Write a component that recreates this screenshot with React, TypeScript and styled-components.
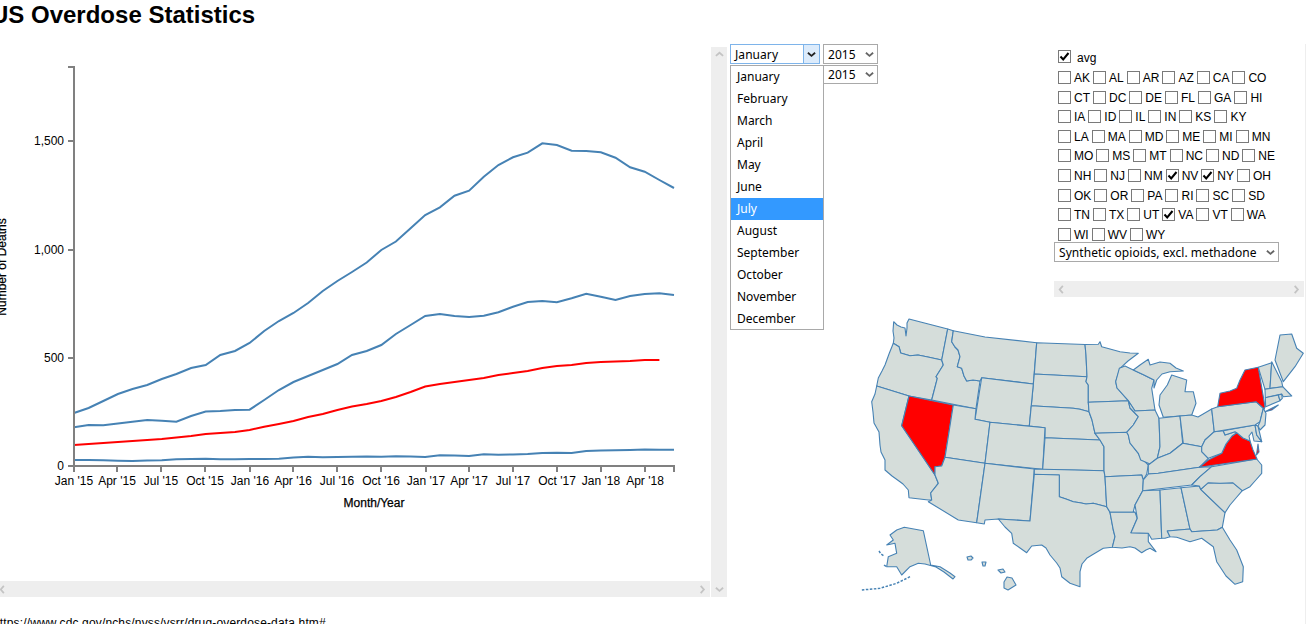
import { Fragment } from 'react';
import styled, { createGlobalStyle } from 'styled-components';

const GlobalStyle = createGlobalStyle`
  html, body {
    margin: 0;
    padding: 0;
    background: #fff;
    overflow: hidden;
  }
`;

const Page = styled.div`
  width: 1306px;
  height: 624px;
  overflow: hidden;
  font-family: "Liberation Sans", Arial, sans-serif;
  color: #000;
`;

const Title = styled.h1`
  margin: 0 0 0 -9px;
  height: 44px;
  font-size: 24px;
  line-height: 30px;
  font-weight: 700;
`;

const Main = styled.div`
  display: grid;
  grid-template-columns: 727px 579px;
  height: 556px;
`;

const ChartPane = styled.div`
  display: grid;
  grid-template-columns: 710px 1px 16px;
  grid-template-rows: 534px 16px;
  margin-top: 3px;
`;

const ChartView = styled.div`
  grid-column: 1 / 3;
  overflow: hidden;
`;

const Track = styled.div<{ $vertical?: boolean }>`
  background: #eeeeee;
  display: flex;
  flex-direction: ${(p) => (p.$vertical ? 'column' : 'row')};
  justify-content: space-between;
  align-items: center;
  box-sizing: border-box;
`;

const HScroll = styled(Track)`
  grid-column: 1;
  grid-row: 2;
  padding: 0 3px 0 0;
  margin-left: -2px;
`;

const VScroll = styled(Track)`
  grid-column: 3;
  grid-row: 1 / 3;
  padding: 3px 0;
`;

const SideScroll = styled(Track)`
  height: 16px;
  margin-top: 19px;
  padding: 0 3px;
`;

const RightSide = styled.div`
  display: flex;
  flex-direction: column;
`;

const TopRow = styled.div`
  display: flex;
  justify-content: space-between;
  height: 266px;
  padding: 0 1px 0 3px;
  box-sizing: border-box;
  border-right: 1px solid #eeeeee;
`;

const DatePicker = styled.div`
  position: relative;
  display: grid;
  grid-template-columns: 90px 55px;
  grid-template-rows: 20px 19px;
  column-gap: 3px;
  row-gap: 1px;
  width: 148px;
  height: 40px;
`;

const Select = styled.div<{ $focused?: boolean }>`
  display: flex;
  align-items: center;
  justify-content: space-between;
  box-sizing: border-box;
  height: 100%;
  padding-left: 4px;
  border: 1px solid ${(p) => (p.$focused ? '#7eb4ea' : '#a9a9a9')};
  background: #fff;
  font-family: "Noto Sans", sans-serif;
  font-size: 12px;
  letter-spacing: 0.06px;
  white-space: nowrap;
`;

const SubstanceSelect = styled(Select)`
  width: 225px;
  height: 20px;
`;

const SelectArrow = styled.span<{ $focused?: boolean }>`
  display: flex;
  align-items: center;
  justify-content: center;
  width: 16px;
  height: 100%;
  box-sizing: border-box;
  border-left: ${(p) => (p.$focused ? '1px solid #7eb4ea' : 'none')};
  background: ${(p) => (p.$focused ? '#dcebfb' : 'transparent')};
`;

const MonthList = styled.ul`
  position: absolute;
  left: 0;
  top: 21px;
  width: 94px;
  height: 265px;
  margin: 0;
  padding: 0;
  box-sizing: border-box;
  list-style: none;
  background: #fff;
  border: 1px solid #a9a9a9;
  font-family: "Noto Sans", sans-serif;
  font-size: 12px;
  z-index: 2;
`;

const MonthItem = styled.li<{ $active?: boolean }>`
  height: 22px;
  line-height: 22px;
  padding-left: 6px;
  background: ${(p) => (p.$active ? '#3399ff' : 'transparent')};
  color: ${(p) => (p.$active ? '#fff' : '#000')};
`;

const StatePanel = styled.div`
  width: 250px;
  padding-top: 6px;
`;

const CheckArea = styled.div`
  height: 192px;
  padding-left: 4px;
`;

const AvgRow = styled.div`
  display: flex;
  height: 21px;
`;

const AvgLabel = styled.span`
  margin: 1px 0 0 3px;
  font-size: 12px;
  line-height: 14px;
`;

const CheckRow = styled.div`
  display: flex;
  height: 19.6px;
`;

const Box = styled.span`
  display: flex;
  align-items: center;
  justify-content: center;
  flex: none;
  box-sizing: border-box;
  width: 13px;
  height: 13px;
  margin-right: 3px;
  border: 1px solid #7a7a7a;
  background: #fff;
`;

const CheckLabel = styled.span`
  margin: 0 3px 0 0;
  font-size: 12px;
  line-height: 14px;
`;

const Footer = styled.div`
  margin: 16px 0 0 -7px;
  font-size: 12px;
  line-height: 14px;
  letter-spacing: 0.15px;
  white-space: nowrap;
`;

const MapWrap = styled.div`
  margin-left: 133px;
  height: 314px;
  box-sizing: border-box;
  border-right: 1px solid #eeeeee;
`;

const AxisLine = styled.path`
  fill: none;
  stroke: #808080;
  stroke-width: 2;
`;

const SeriesLine = styled.polyline<{ $avg?: boolean }>`
  fill: none;
  stroke: ${(p) => (p.$avg ? '#ff0000' : '#4682b4')};
  stroke-width: 2;
`;

const TickLabel = styled.text`
  font-family: "Liberation Sans", Arial, sans-serif;
  font-size: 12px;
`;

const AxisTitle = styled(TickLabel)`
  stroke: #000;
  stroke-width: 0.25;
`;

const StateShape = styled.polygon<{ $selected?: boolean }>`
  fill: ${(p) => (p.$selected ? '#ff0000' : '#d5dddA')};
  stroke: #4682b4;
  stroke-width: 1.1;
  stroke-linejoin: round;
`;

const IslandChain = styled.polyline`
  fill: none;
  stroke: #4682b4;
  stroke-width: 1.5;
  stroke-dasharray: 2.5 1.5;
`;

const Chevron = ({ dir, color, size = 9 }: { dir: 'up' | 'down' | 'left' | 'right'; color: string; size?: number }) => {
  const paths = {
    up: 'M1 6.5 L5 3 L9 6.5',
    down: 'M1 3 L5 6.5 L9 3',
    left: 'M6.5 1 L3 5 L6.5 9',
    right: 'M3 1 L6.5 5 L3 9',
  };
  return (
    <svg width={size} height={size} viewBox="0 0 10 10">
      <path d={paths[dir]} fill="none" stroke={color} strokeWidth="2" />
    </svg>
  );
};

const Tick = () => (
  <svg width="11" height="11" viewBox="0 0 11 11">
    <path d="M1.5 5.5 L4.2 8.5 L9.5 2" fill="none" stroke="#000" strokeWidth="2" />
  </svg>
);

const MONTHS = ['January', 'February', 'March', 'April', 'May', 'June', 'July', 'August', 'September', 'October', 'November', 'December'];

const STATE_ROWS = [
  ['AK', 'AL', 'AR', 'AZ', 'CA', 'CO'],
  ['CT', 'DC', 'DE', 'FL', 'GA', 'HI'],
  ['IA', 'ID', 'IL', 'IN', 'KS', 'KY'],
  ['LA', 'MA', 'MD', 'ME', 'MI', 'MN'],
  ['MO', 'MS', 'MT', 'NC', 'ND', 'NE'],
  ['NH', 'NJ', 'NM', 'NV', 'NY', 'OH'],
  ['OK', 'OR', 'PA', 'RI', 'SC', 'SD'],
  ['TN', 'TX', 'UT', 'VA', 'VT', 'WA'],
  ['WI', 'WV', 'WY'],
];
const CHECKED = ['NV', 'NY', 'VA'];

const X_TICKS = [
  ['Jan \'15', 74], ['Apr \'15', 117], ['Jul \'15', 161], ['Oct \'15', 205],
  ['Jan \'16', 250], ['Apr \'16', 293], ['Jul \'16', 337], ['Oct \'16', 381],
  ['Jan \'17', 426], ['Apr \'17', 469], ['Jul \'17', 513], ['Oct \'17', 557],
  ['Jan \'18', 601], ['Apr \'18', 645],
] as const;

const Y_TICKS = [['0', 466], ['500', 358], ['1,000', 250], ['1,500', 141]] as const;

const SERIES_A = [413, 408, 401, 394, 389, 385, 379, 374, 368, 365, 355, 351, 343, 331, 321, 313, 303, 291, 281, 272, 262.5, 250, 241.5, 228.3, 215, 207.3, 195.7, 190.7, 176.7, 165, 157.3, 152.7, 143.3, 145, 150.7, 151, 152.3, 157.7, 167.3, 171.7, 180, 188];
const SERIES_B = [427.3, 425, 425.3, 423.5, 421.7, 420, 420.7, 421.7, 416, 411.5, 411, 410, 409.7, 400, 390, 382, 376, 370, 364, 355, 351, 345, 334, 325, 316, 314, 316, 317, 315.7, 312.3, 306.7, 302, 301, 302.3, 298.3, 293.7, 296.7, 300, 296, 294, 293.3, 295];
const AVERAGE = [445, 444, 443, 442, 441, 440, 439, 437.5, 436, 434, 433, 432, 430, 426.7, 424, 421, 417, 414, 410, 406.5, 404, 401, 397, 392, 386.5, 384, 382, 380, 378, 375, 373, 371, 368, 366, 365, 363, 362, 361.5, 361, 360, 360];
const SERIES_C = [460, 460, 460.3, 460.7, 461, 460.5, 460.3, 459.3, 459, 458.7, 459.3, 459.2, 459, 459, 458.7, 457.5, 456.8, 457.3, 457, 456.7, 456.5, 456.7, 456.2, 456.6, 457, 455.2, 455.5, 456, 454.3, 454.8, 454.5, 454, 453, 452.7, 453, 451, 450.4, 450.3, 450, 449.4, 449.7, 449.7];

const toPoints = (ys: number[]) => ys.map((y, i) => `${(74 + i * 14.634).toFixed(1)},${y}`).join(' ');

// traced from the reference, in page pixels
const STATES: { id: string; points: string }[] = [
  { id: 'WA', points: '909,319 947.7,329 941.7,360 926.7,356.7 918,355 910,355.7 900.7,353 899,346.7 893.3,343.3 894,338 893,331 893.7,321.7 897,325 901,327 905,328 906,336 907,328 907,323' },
  { id: 'OR', points: '893.3,343.3 899,346.7 900.7,353 910,355.7 918,355 926.7,356.7 941.7,360 943.3,365 936,376.7 937.3,378.3 931.7,400 909,396 876.7,386 878.3,378 882,371 885,365 889,354' },
  { id: 'ID', points: '947.7,329 953.3,330.7 951.7,341.7 955,347 958,350 960,356.7 957.3,366.7 961.7,368.3 964,376 966.7,381 973,380 980,381 976,408.7 931.7,400 937.3,378.3 936,376.7 943.3,365 941.7,360' },
  { id: 'MT', points: '953.3,330.7 985,337 1036.7,342.7 1033.3,384 981.7,377.7 980,381 973,380 966.7,381 964,376 961.7,368.3 957.3,366.7 960,356.7 958,350 955,347 951.7,341.7' },
  { id: 'ND', points: '1036.7,342.7 1085,344.5 1086,355 1087,376.7 1034.3,374' },
  { id: 'SD', points: '1034.3,374 1087,376.7 1086,381.7 1088.3,385 1088.3,402.3 1089,411.7 1080,409.3 1073.3,408.3 1031.3,405.7' },
  { id: 'WY', points: '981.7,377.7 1033.3,384 1029.3,426 990,422.3 975,419.3' },
  { id: 'NE', points: '1031.3,405.7 1073.3,408.3 1080,409.3 1089,411.7 1092,420 1095,433.3 1100,440 1045,437.7 1045,427.7 1029.3,426' },
  { id: 'CA', points: '876.7,386 909,396 901.7,425.7 935,475 938.3,483.3 930.7,493 931.7,500 928.3,500 909,497.7 908.3,490 903,484 900,481.7 892,476 885,470 885,460 881,452 880,445 879,432 874,423 873,412 871.7,401.7 875,394' },
  { id: 'NV', points: '909,396 953.3,405 945,457.3 941.7,466 935,466.7 935,475 901.7,425.7' },
  { id: 'UT', points: '953.3,405 976,408.7 975,419.3 990,422.3 985,463.3 945,457.3' },
  { id: 'AZ', points: '945,457.3 985,463.3 976.7,522.7 958.3,520 928.3,501.7 931.7,500 930.7,493 938.3,483.3 935,475 935,466.7 941.7,466' },
  { id: 'CO', points: '990,422.3 1045,427.7 1042.7,469.3 985,463.3' },
  { id: 'NM', points: '985,463.3 1034.3,469 1030,521 998.3,519 985,520 984.3,524 976.7,522.7' },
  { id: 'KS', points: '1045,437.7 1100,440 1104,446.7 1104,470.7 1042.7,469.3' },
  { id: 'OK', points: '1034.3,469 1104,470.7 1105,476.7 1106.7,506.7 1093.3,503.3 1086,504 1080,502.7 1073.3,501.7 1066,499 1059.3,496.7 1059.3,475 1034.3,474.3' },
  { id: 'TX', points: '1034.3,474.3 1059.3,475 1059.3,496.7 1066,499 1073.3,501.7 1080,502.7 1086,504 1093.3,503.3 1106.7,506.7 1110,512.3 1113.3,530 1115,536.7 1112.3,547.3 1103.3,548.3 1092,555 1086.7,558.3 1082,564 1080,571.7 1080,586.7 1070,583.3 1061.7,576.7 1060,568 1056.7,563 1050,555 1046,548 1041.7,545 1031.7,546 1026.7,552.7 1020,548 1013.3,543.3 1011.7,533.3 1005,527 998.3,519 1030,521' },
  { id: 'MN', points: '1085,344.5 1098.3,344.3 1100,341.7 1101.7,346.7 1110,349 1120,351.7 1130,353 1138.3,353.3 1128,361 1120,368.3 1115.7,381.7 1117,388 1128.3,400.7 1088.3,402.3 1088.3,385 1086,381.7 1087,376.7 1086,355' },
  { id: 'IA', points: '1088.3,402.3 1128.3,400.7 1130,408 1138.3,416.7 1133.3,425 1126.7,432.3 1095,433.3 1092,420 1089,411.7' },
  { id: 'MO', points: '1095,433.3 1126.7,432.3 1128.3,435 1130,443 1138.3,453.3 1140,456.7 1148.3,465 1146.7,474 1143.3,480 1141.7,475 1105,476.7 1104,470.7 1104,446.7 1100,440' },
  { id: 'AR', points: '1105,476.7 1141.7,475 1143.3,480 1142.7,490.7 1135,505 1133.3,511.7 1135,512.3 1110,512.3 1106.7,506.7' },
  { id: 'LA', points: '1110,512.3 1135,512.3 1137.3,518.3 1131,532.7 1148.3,533.3 1148.3,541.7 1156,551.7 1150,548.3 1146,550 1141.7,552.7 1135,548 1130,546.7 1122,548 1112.3,547.3 1115,536.7 1113.3,530' },
  { id: 'WI', points: '1119.3,368.3 1125,366 1133.3,370 1144,375 1154,380 1151.7,388.3 1155,410 1135,411 1128.3,400.7 1117,388 1115.7,381.7' },
  { id: 'IL', points: '1135,411 1155,410 1159,418.3 1160,446.7 1157.3,458.3 1150,464 1140.7,460 1138.3,453.3 1130,443 1128.3,435 1126.7,432.3 1133.3,425 1138.3,416.7 1130,408 1128.3,400.7' },
  { id: 'MIU', points: '1133.3,370 1140,365 1148.3,359.3 1150,365 1160,362 1170,363.3 1176,368 1183.3,371 1170,371.7 1162,374 1156.7,380 1154,388 1154,380 1144,375' },
  { id: 'MIL', points: '1163.3,417.3 1159,405 1160,395 1167.3,385 1171.7,375 1186.7,380 1185,391.7 1193.3,391.7 1196,403.3 1191.7,415 1180,416' },
  { id: 'IN', points: '1159,418.3 1180,416 1182.7,443.3 1170,453.3 1157.3,458.3 1160,446.7' },
  { id: 'OH', points: '1180,416 1191.7,415 1198,417 1211.7,409 1214.3,431.7 1205,440 1201.7,446.7 1183.3,443.3' },
  { id: 'KY', points: '1148.3,465 1157.3,458.3 1170,453.3 1182.7,443.3 1201.7,446.7 1201.7,451.7 1208.3,458.3 1199.3,467.3 1158.3,473.3 1148.3,474' },
  { id: 'TN', points: '1148.3,474 1158.3,473.3 1199.3,467.3 1211.7,466.7 1200,476.7 1191.7,485 1142.7,490.7 1143.3,480' },
  { id: 'MS', points: '1142.7,490.7 1160,490 1161.7,538.3 1151.7,539.3 1148.3,533.3 1131,532.7 1137.3,518.3 1135,505' },
  { id: 'AL', points: '1160,490 1181,487.7 1190,529 1167.3,531 1170,536.7 1165,538.3 1161.7,538.3' },
  { id: 'GA', points: '1181,487.7 1199.3,486 1200.7,489.3 1225,512.7 1222.3,527.3 1217.3,530 1191.7,531.7 1190,529' },
  { id: 'FL', points: '1167.3,531 1190,529 1191.7,531.7 1217.3,530 1222.3,527.3 1230,540 1236.7,550 1243.3,566.7 1242.7,581.7 1235,584.3 1226,576 1216.7,561.7 1213.3,546.7 1201.7,538.3 1190,541.7 1176.7,537.3 1170,536.7' },
  { id: 'SC', points: '1200.7,489.3 1208.3,482.7 1220,483.3 1232.7,482.7 1242.3,490.7 1236,498 1230,505 1225,512.7' },
  { id: 'NC', points: '1191.7,485 1200,476.7 1211.7,466.7 1256.7,459 1261.7,465 1261.7,473.3 1255,481 1250,486.7 1242.3,490.7 1232.7,482.7 1220,483.3 1208.3,482.7 1200.7,489.3 1199.3,486' },
  { id: 'VA', points: '1199.3,467.3 1208.3,460 1221.7,453.3 1226,444 1232,436 1236.7,432.7 1243,438 1250,441 1253,450 1257,459' },
  { id: 'VAE', points: '1258,444 1259,452 1256.5,455' },
  { id: 'WV', points: '1214.3,431.7 1223.3,430.7 1225,435 1235,431.7 1236.7,432.7 1232,436 1226,444 1221.7,453.3 1208.3,458.3 1201.7,451.7 1201.7,446.7 1205,440' },
  { id: 'MD', points: '1223.3,430.7 1255,425 1256.7,435 1261.7,441.7 1254,441 1252,432 1249,436 1250,441 1243,438 1236.7,432.7 1235,431.7 1225,435' },
  { id: 'DE', points: '1255,425 1258,426 1261.7,441.7 1256.7,435' },
  { id: 'PA', points: '1211.7,409 1217.7,406.7 1256,401.7 1263.3,408.3 1260,421.7 1255,425 1214.3,431.7' },
  { id: 'NJ', points: '1263.3,408.3 1266,413.3 1265,425 1260,430 1258,426 1260,421.7' },
  { id: 'NY', points: '1217.7,406.7 1220,393.3 1230,391 1236.7,388.3 1240,380 1245,370 1258.3,367.3 1265,406.7 1264.3,409 1256,401.7' },
  { id: 'LI', points: '1265,411.7 1278.3,405 1271.7,410' },
  { id: 'VT', points: '1258.3,367.3 1271.7,362.7 1270,388.3 1265,389.3' },
  { id: 'NH', points: '1271.7,361.7 1281.7,381.7 1282.7,386.7 1270,388.3' },
  { id: 'ME', points: '1275,360 1280,335 1291.7,334 1296.7,348.3 1303.3,353.3 1295,366.7 1283.3,381.7' },
  { id: 'MA', points: '1265,389.3 1282.7,386.7 1291.7,396 1283.3,396.7 1281.7,394 1265.3,397.7' },
  { id: 'CT', points: '1265.3,397.7 1278.3,395 1280,400.7 1265.7,406.7' },
  { id: 'RI', points: '1278.3,395 1281.7,394.3 1282.3,398.3 1280,400.7' },
  { id: 'AK', points: '904.3,527.3 923.3,530.7 930.7,565 940,566.7 950,573 955,576.7 953,579 944,572 936,567 925,564 918.3,563.3 910,566.7 901.7,575 896.7,566.7 886.7,566.7 888.3,556.7 896.7,553.3 895,543.3 886.7,545 893.3,540 890,535 896.7,530' },
  { id: 'HI1', points: '967,557 971,556 973,558 971,560 968,560' },
  { id: 'HI2', points: '982,562 986,562 985,566 983,566' },
  { id: 'HI3', points: '998,570 1003,569 1005,572 1001,573' },
  { id: 'HI4', points: '1004,582 1007,577 1012,578 1016,585 1008,590 1004,588' },
];

const SELECTED_STATES = ['NV', 'NY', 'LI', 'VA', 'VAE'];

export default function App() {
  return (
    <Page>
      <GlobalStyle />
      <Title>US Overdose Statistics</Title>
      <Main>
        <ChartPane>
          <ChartView>
            <svg width="711" height="534" viewBox="0 47 711 534">
              <SeriesLine points={toPoints(SERIES_A)} />
              <SeriesLine points={toPoints(SERIES_B)} />
              <SeriesLine points={toPoints(SERIES_C)} />
              <SeriesLine $avg points={toPoints(AVERAGE)} />
              <AxisLine d="M68 67 H74 V466 H674 V472" />
              {Y_TICKS.map(([label, y]) => (
                <g key={label}>
                  <AxisLine d={`M68 ${y} H74`} />
                  <TickLabel x="64" y={y + 4} textAnchor="end">{label}</TickLabel>
                </g>
              ))}
              {X_TICKS.map(([label, x]) => (
                <g key={label}>
                  <AxisLine d={`M${x} 466 V472`} />
                  <TickLabel x={x} y="485" textAnchor="middle">{label}</TickLabel>
                </g>
              ))}
              <AxisTitle x="374" y="507" textAnchor="middle">Month/Year</AxisTitle>
              <AxisTitle transform="rotate(-90)" x="-267" y="6" textAnchor="middle">Number of Deaths</AxisTitle>
            </svg>
          </ChartView>
          <HScroll>
            <Chevron dir="left" color="#c4c4c4" />
            <Chevron dir="right" color="#c4c4c4" />
          </HScroll>
          <VScroll $vertical>
            <Chevron dir="up" color="#c4c4c4" />
            <Chevron dir="down" color="#c4c4c4" />
          </VScroll>
        </ChartPane>
        <RightSide>
          <TopRow>
            <DatePicker>
              <Select $focused>
                January
                <SelectArrow $focused><Chevron dir="down" color="#222" /></SelectArrow>
              </Select>
              <Select>
                2015
                <SelectArrow><Chevron dir="down" color="#666" /></SelectArrow>
              </Select>
              <Select>
                January
                <SelectArrow><Chevron dir="down" color="#666" /></SelectArrow>
              </Select>
              <Select>
                2015
                <SelectArrow><Chevron dir="down" color="#666" /></SelectArrow>
              </Select>
              <MonthList>
                {MONTHS.map((m) => (
                  <MonthItem key={m} $active={m === 'July'}>{m}</MonthItem>
                ))}
              </MonthList>
            </DatePicker>
            <StatePanel>
              <CheckArea>
                <AvgRow>
                  <Box><Tick /></Box>
                  <AvgLabel>avg</AvgLabel>
                </AvgRow>
                {STATE_ROWS.map((row) => (
                  <CheckRow key={row[0]}>
                    {row.map((code) => (
                      <Fragment key={code}>
                        <Box>{CHECKED.includes(code) && <Tick />}</Box>
                        <CheckLabel>{code}</CheckLabel>
                      </Fragment>
                    ))}
                  </CheckRow>
                ))}
              </CheckArea>
              <SubstanceSelect>
                Synthetic opioids, excl. methadone
                <SelectArrow><Chevron dir="down" color="#666" /></SelectArrow>
              </SubstanceSelect>
              <SideScroll>
                <Chevron dir="left" color="#c4c4c4" />
                <Chevron dir="right" color="#c4c4c4" />
              </SideScroll>
            </StatePanel>
          </TopRow>
          <MapWrap>
            <svg width="445" height="290" viewBox="860 310 445 290">
              {STATES.map((s) => (
                <StateShape key={s.id} points={s.points} $selected={SELECTED_STATES.includes(s.id)} />
              ))}
              <IslandChain points="910,576.7 896.7,583.3 880,588.3 861.7,590" />
              <IslandChain points="879,551 881,554 884,556" />
              <IslandChain points="884,565 887,567" />
            </svg>
          </MapWrap>
        </RightSide>
      </Main>
      <Footer>https://www.cdc.gov/nchs/nvss/vsrr/drug-overdose-data.htm#</Footer>
    </Page>
  );
}
